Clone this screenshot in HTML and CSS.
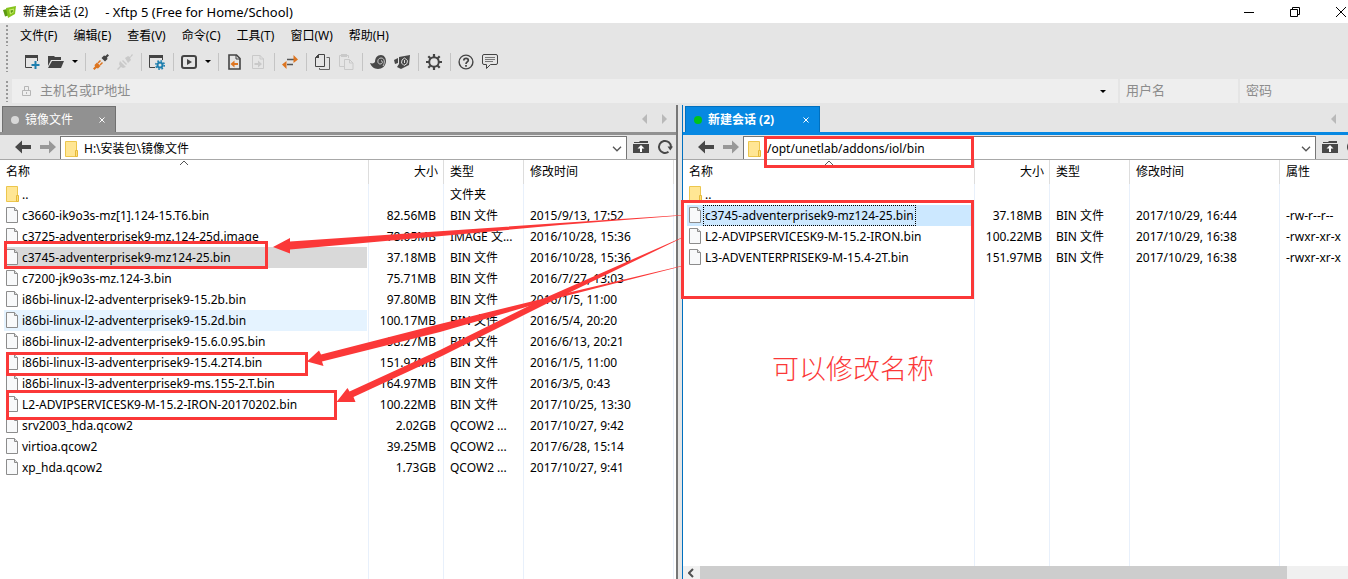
FILE: index.html
```html
<!DOCTYPE html>
<html lang="zh-CN">
<head>
<meta charset="utf-8">
<title>新建会话 (2) - Xftp 5 (Free for Home/School)</title>
<link rel="stylesheet" href="styles.css">
</head>
<body>
<svg class="defs" aria-hidden="true">
  <symbol id="file" viewBox="0 0 13 16"><path d="M.5.5h8l3 3v12H.5z" fill="#f8f9fa" stroke="#8c8c8c"/><path d="M8.500.5v3h3" fill="#ddd" stroke="#8c8c8c"/></symbol>
  <symbol id="folder" viewBox="0 0 13 16"><path d="M.5.5h11v15H.5z" fill="#ffe694" stroke="#ecc64d"/><path d="M10.500 9.500h2v6h-2z" fill="#ffe07a" stroke="#e5b93a"/></symbol>
  <symbol id="back" viewBox="0 0 16 14"><path d="M0 7l7-6.500V5h9v4H7v4.500z" fill="currentColor"/></symbol>
  <symbol id="forward" viewBox="0 0 16 14"><path d="M16 7L9 .5V5H0v4h9v4.500z" fill="currentColor"/></symbol>
  <symbol id="up" viewBox="0 0 16 14"><path d="M1 2h5l1-1h8v2H1zM0 4h16v9H0z" fill="#484848"/><path d="M8 5l3.500 3.500H9V12H7V8.500H4.500z" fill="#fff"/></symbol>
  <symbol id="refresh" viewBox="0 0 16 16"><path d="M11.500 12.800A6 6 0 1 1 14 8" fill="none" stroke="#484848" stroke-width="2"/><path d="M10.500 7.500H16l-2.700 4z" fill="#484848"/></symbol>
  <symbol id="chevron" viewBox="0 0 10 6"><path d="M1 .8l4 4 4-4" fill="none" stroke="#555" stroke-width="1.300"/></symbol>
  <symbol id="caret" viewBox="0 0 6 3"><path d="M0 0h6L3 3z" fill="#000"/></symbol>
  <symbol id="prev" viewBox="0 0 5 10"><path d="M5 0v10L0 5z" fill="#b9b9b9"/></symbol>
  <symbol id="next" viewBox="0 0 5 10"><path d="M0 0v10l5-5z" fill="#b9b9b9"/></symbol>
  <symbol id="close" viewBox="0 0 6 6"><path d="M.5.5l5 5M5.500.5l-5 5" stroke="#fff"/></symbol>
</svg>

<div class="app">
  <header class="titlebar">
    <svg class="logo" viewBox="0 0 14 14"><path d="M0 5l6-1.500 1 6.500-5 1.500z" fill="#5d9a12"/><path d="M3 3l10-2-1 8-7 4z" fill="#86c41c"/><path d="M6 4.500l5-1-.6 4.300L7 9.500z" fill="#c5e86a"/><path d="M7.500 5.500l2.500-.5-.3 2-1.700 1z" fill="#5d9a12"/></svg>
    <h1>新建会话 (2)</h1><span class="product">- Xftp 5 (Free for Home/School)</span>
    <div class="window-buttons">
      <button type="button" aria-label="最小化"><svg viewBox="0 0 10 10"><path d="M0 5.500h10" stroke="#000"/></svg></button>
      <button type="button" aria-label="还原"><svg viewBox="0 0 10 10"><path d="M.5 2.500h7v7h-7zM2.500 2.500v-2h7v7h-2" fill="none" stroke="#000"/></svg></button>
      <button type="button" aria-label="关闭"><svg viewBox="0 0 10 10"><path d="M0 0l10 10M10 0L0 10" stroke="#000"/></svg></button>
    </div>
  </header>

  <nav class="menubar grip">
    <button type="button">文件(F)</button><button type="button">编辑(E)</button><button type="button">查看(V)</button><button type="button">命令(C)</button><button type="button">工具(T)</button><button type="button">窗口(W)</button><button type="button">帮助(H)</button>
  </nav>

  <div class="toolbar grip" role="toolbar">
    <button type="button" aria-label="新建"><svg viewBox="0 0 16 16"><path d="M8 13.500H1.500v-11h12V7" fill="none" stroke="#444"/><path d="M1 1h13v3H1z" fill="#444"/><path d="M11.500 7v8M7.500 11h8" stroke="#1f7fae" stroke-width="2"/></svg></button>
    <button type="button" aria-label="打开"><svg viewBox="0 0 16 16"><path d="M0 2h6l1 1h6v3H3L0 12z" fill="#444"/><path d="M4 7h12l-3 7H0z" fill="#444"/></svg></button>
    <button type="button" class="drop" aria-label="打开列表"><svg><use href="#caret"/></svg></button>
    <i></i>
    <button type="button" aria-label="连接"><svg viewBox="0 0 16 16"><path d="M8.500 4l2.500-2.500 1.500.5L14.500 0 16 1.500 14 3.500l.5 1.500L12 7.500z" fill="#444"/><path d="M4 8.500l3.500 3.500L5 14.500l-1.500-.5L1.500 16 0 14.500l2-2-.5-1.500z" fill="#dd7520"/><path d="M5 9l2.500-2.500M7 11l2.500-2.500" stroke="#dd7520" stroke-width="1.500"/></svg></button>
    <button type="button" aria-label="断开"><svg viewBox="0 0 16 16"><path d="M8 4l3-2 2 1 2-3 1 1-3 3 1 2-3 3zM3 7l6 6-3 1-2-1-3 3-1-1 3-3-1-2zM6 6l4 4-1 1-4-4z" fill="#c9c9c9"/></svg></button>
    <i></i>
    <button type="button" aria-label="会话属性"><svg viewBox="0 0 16 16"><path d="M6 13.500H.5v-11h13V6" fill="none" stroke="#444"/><path d="M0 1h14v3H0z" fill="#444"/><circle cx="11" cy="11" r="2.500" fill="#e5e5e5" stroke="#1f7fae" stroke-width="2"/><circle cx="11" cy="11" r="4.200" fill="none" stroke="#1f7fae" stroke-width="1.600" stroke-dasharray="1.650 1.650"/></svg></button>
    <i></i>
    <button type="button" aria-label="执行"><svg viewBox="0 0 16 16"><rect x="1" y="2" width="14" height="12" rx="2" fill="none" stroke="#444" stroke-width="2"/><path d="M6 5l5 3-5 3z" fill="#444"/></svg></button>
    <button type="button" class="drop" aria-label="执行列表"><svg><use href="#caret"/></svg></button>
    <i></i>
    <button type="button" aria-label="传输到左侧"><svg viewBox="0 0 16 16"><path d="M3 1h7.500L14 4.500V15H3z" fill="none" stroke="#444" stroke-width="1.600"/><path d="M10 1v4h4" fill="none" stroke="#444"/><path d="M4.500 10l4-3.500V9H12v2H8.500v2.500z" fill="#dd7520"/></svg></button>
    <button type="button" aria-label="传输到右侧"><svg viewBox="0 0 16 16"><path d="M2.500 1.500H10l3.500 3.500v9.500h-11z" fill="none" stroke="#c9c9c9"/><path d="M10 1v4h4" fill="none" stroke="#c9c9c9"/><path d="M12 10L8 6.500V9H4.500v2H8v2.500z" fill="#c9c9c9"/></svg></button>
    <i></i>
    <button type="button" aria-label="同步"><svg viewBox="0 0 16 16"><path d="M5 5.500h7M5 10.500h6" stroke="#555" stroke-width="1.500"/><path d="M11.500 1L16 5.500 11.500 9zM4.500 7v8L0 10.500z" fill="#dd7520"/></svg></button>
    <i></i>
    <button type="button" aria-label="复制"><svg viewBox="0 0 16 16"><path d="M4.500.5h6v12h-9v-9z" fill="none" stroke="#444"/><path d="M1 4l4-4v4z" fill="#444"/><path d="M12.500 3.500h3v12h-10V14" fill="none" stroke="#666"/></svg></button>
    <button type="button" aria-label="粘贴"><svg viewBox="0 0 16 16"><path d="M6 12.500H1.500v-11h9V4" fill="none" stroke="#c9c9c9"/><path d="M3 0h6v3H3z" fill="#c9c9c9"/><path d="M6.500 5.500h5l3.500 3.500v6.500H6.500zM11.500 5.500V9H15" fill="none" stroke="#c9c9c9"/></svg></button>
    <i></i>
    <button type="button" aria-label="Xshell"><svg viewBox="0 0 16 16"><path d="M0 9c3 1 4 0 5-1 0-4 2-7 6-7 3 0 5 3 5 6 0 5-4 8-8 8-4 0-7-3-8-6z" fill="#484848"/><path d="M13 12c2-3 2-8-2-8-4 0-4 6-1 6 3 0 3-3 1-3.500" fill="none" stroke="#ccc"/></svg></button>
    <button type="button" aria-label="Xftp"><svg viewBox="0 0 16 16"><path d="M0 6l4-2v5l-3 1zM5 3l11-2-1 10-8 4-4-2 2-3z" fill="#484848"/><path d="M10.500 4l3 2.500-.5 3-3 2L7.500 9 8 6z" fill="#484848" stroke="#ddd"/><path d="M10.500 6v3" stroke="#ddd"/></svg></button>
    <i></i>
    <button type="button" aria-label="选项"><svg viewBox="0 0 16 16"><circle cx="8" cy="8" r="4.800" fill="none" stroke="#444" stroke-width="2"/><path d="M8 0v3M8 13v3M0 8h3M13 8h3M2.300 2.300l2 2M11.700 11.700l2 2M13.700 2.300l-2 2M4.300 11.700l-2 2" stroke="#444" stroke-width="2.200"/></svg></button>
    <i></i>
    <button type="button" aria-label="帮助"><svg viewBox="0 0 16 16"><circle cx="8" cy="8" r="6.900" fill="none" stroke="#444" stroke-width="1.400"/><path d="M5.800 6.500C5.800 3.500 10.300 3.800 10.300 6.200 10.300 8 8 7.800 8 10M8 11v1.800" fill="none" stroke="#444" stroke-width="1.700"/></svg></button>
    <button type="button" aria-label="反馈"><svg viewBox="0 0 16 16"><path d="M2 .5h12q1.500 0 1.500 1.500v7q0 1.500-1.500 1.500H8.500l-4 4v-4H2Q.5 10.500.5 9V2Q.5.5 2 .5z" fill="none" stroke="#444"/><path d="M3 3.500h10M3 5.500h10M3 7.500h8" stroke="#777"/></svg></button>
  </div>

  <form class="connect grip">
    <div class="host">
      <svg viewBox="0 0 9 10"><path d="M.5 4.500h8v5h-8zM2.500 4.500v-4h4v4M4.500 6v2" fill="none" stroke="#b5b5b5"/></svg>
      <input type="text" placeholder="主机名或IP地址" aria-label="主机名或IP地址">
      <button type="button" aria-label="历史"><svg class="caret"><use href="#caret"/></svg></button>
    </div>
    <input type="text" placeholder="用户名" aria-label="用户名">
    <input type="password" placeholder="密码" aria-label="密码">
  </form>

  <main class="panes">
    <section class="pane local">
      <div class="tabs">
        <button type="button" class="tab"><span class="dot"></span><span>镜像文件</span><svg><use href="#close"/></svg></button>
        <div class="tab-scroll"><svg><use href="#prev"/></svg><svg><use href="#next"/></svg></div>
      </div>
      <div class="location">
        <button type="button" aria-label="后退" class="go"><svg><use href="#back"/></svg></button>
        <button type="button" aria-label="前进" class="go off"><svg><use href="#forward"/></svg></button>
        <div class="path"><svg class="type"><use href="#folder"/></svg><input type="text" value="H:\安装包\镜像文件" aria-label="本地路径"><svg class="chevron"><use href="#chevron"/></svg></div>
        <button type="button" class="act" aria-label="上级目录"><svg class="up"><use href="#up"/></svg></button>
        <button type="button" class="act" aria-label="刷新"><svg><use href="#refresh"/></svg></button>
      </div>
      <div class="list">
        <table>
          <colgroup><col class="c-name"><col class="c-size"><col class="c-type"><col class="c-date"><col></colgroup>
          <thead><tr><th>名称<svg class="sort" viewBox="0 0 10 6"><path d="M1 5l4-4 4 4" fill="none" stroke="#555"/></svg></th><th class="num">大小</th><th>类型</th><th>修改时间</th><th></th></tr></thead>
          <tbody>
            <tr><td><div class="name"><svg class="type"><use href="#folder"/></svg><span>..</span></div></td><td></td><td>文件夹</td><td></td><td></td></tr>
            <tr><td><div class="name"><svg class="type"><use href="#file"/></svg><span>c3660-ik9o3s-mz[1].124-15.T6.bin</span></div></td><td class="num">82.56MB</td><td>BIN 文件</td><td>2015/9/13, 17:52</td><td></td></tr>
            <tr><td><div class="name"><svg class="type"><use href="#file"/></svg><span>c3725-adventerprisek9-mz.124-25d.image</span></div></td><td class="num">78.05MB</td><td>IMAGE 文...</td><td>2016/10/28, 15:36</td><td></td></tr>
            <tr><td><div class="name inactive"><svg class="type"><use href="#file"/></svg><span>c3745-adventerprisek9-mz124-25.bin</span></div></td><td class="num">37.18MB</td><td>BIN 文件</td><td>2016/10/28, 15:36</td><td></td></tr>
            <tr><td><div class="name"><svg class="type"><use href="#file"/></svg><span>c7200-jk9o3s-mz.124-3.bin</span></div></td><td class="num">75.71MB</td><td>BIN 文件</td><td>2016/7/27, 13:03</td><td></td></tr>
            <tr><td><div class="name"><svg class="type"><use href="#file"/></svg><span>i86bi-linux-l2-adventerprisek9-15.2b.bin</span></div></td><td class="num">97.80MB</td><td>BIN 文件</td><td>2016/1/5, 11:00</td><td></td></tr>
            <tr><td><div class="name hover"><svg class="type"><use href="#file"/></svg><span>i86bi-linux-l2-adventerprisek9-15.2d.bin</span></div></td><td class="num">100.17MB</td><td>BIN 文件</td><td>2016/5/4, 20:20</td><td></td></tr>
            <tr><td><div class="name"><svg class="type"><use href="#file"/></svg><span>i86bi-linux-l2-adventerprisek9-15.6.0.9S.bin</span></div></td><td class="num">98.27MB</td><td>BIN 文件</td><td>2016/6/13, 20:21</td><td></td></tr>
            <tr><td><div class="name"><svg class="type"><use href="#file"/></svg><span>i86bi-linux-l3-adventerprisek9-15.4.2T4.bin</span></div></td><td class="num">151.97MB</td><td>BIN 文件</td><td>2016/1/5, 11:00</td><td></td></tr>
            <tr><td><div class="name"><svg class="type"><use href="#file"/></svg><span>i86bi-linux-l3-adventerprisek9-ms.155-2.T.bin</span></div></td><td class="num">164.97MB</td><td>BIN 文件</td><td>2016/3/5, 0:43</td><td></td></tr>
            <tr><td><div class="name"><svg class="type"><use href="#file"/></svg><span>L2-ADVIPSERVICESK9-M-15.2-IRON-20170202.bin</span></div></td><td class="num">100.22MB</td><td>BIN 文件</td><td>2017/10/25, 13:30</td><td></td></tr>
            <tr><td><div class="name"><svg class="type"><use href="#file"/></svg><span>srv2003_hda.qcow2</span></div></td><td class="num">2.02GB</td><td>QCOW2 ...</td><td>2017/10/27, 9:42</td><td></td></tr>
            <tr><td><div class="name"><svg class="type"><use href="#file"/></svg><span>virtioa.qcow2</span></div></td><td class="num">39.25MB</td><td>QCOW2 ...</td><td>2017/6/28, 15:14</td><td></td></tr>
            <tr><td><div class="name"><svg class="type"><use href="#file"/></svg><span>xp_hda.qcow2</span></div></td><td class="num">1.73GB</td><td>QCOW2 ...</td><td>2017/10/27, 9:41</td><td></td></tr>
            <tr class="rest"><td></td><td></td><td></td><td></td><td></td></tr>
          </tbody>
        </table>
      </div>
    </section>

    <section class="pane remote">
      <div class="tabs">
        <button type="button" class="tab"><span class="dot"></span><span>新建会话 (2)</span><svg><use href="#close"/></svg></button>
        <div class="tab-scroll"><svg><use href="#prev"/></svg><svg><use href="#next"/></svg></div>
      </div>
      <div class="location">
        <button type="button" aria-label="后退" class="go"><svg><use href="#back"/></svg></button>
        <button type="button" aria-label="前进" class="go off"><svg><use href="#forward"/></svg></button>
        <div class="path"><svg class="type"><use href="#folder"/></svg><input type="text" value="/opt/unetlab/addons/iol/bin" aria-label="远程路径"><svg class="chevron"><use href="#chevron"/></svg></div>
        <button type="button" class="act" aria-label="上级目录"><svg class="up"><use href="#up"/></svg></button>
        <button type="button" class="act" aria-label="刷新"><svg><use href="#refresh"/></svg></button>
      </div>
      <div class="list">
        <table>
          <colgroup><col class="c-name"><col class="c-size"><col class="c-type"><col class="c-date"><col></colgroup>
          <thead><tr><th>名称<svg class="sort" viewBox="0 0 10 6"><path d="M1 5l4-4 4 4" fill="none" stroke="#555"/></svg></th><th class="num">大小</th><th>类型</th><th>修改时间</th><th>属性</th></tr></thead>
          <tbody>
            <tr><td><div class="name"><svg class="type"><use href="#folder"/></svg><span>..</span></div></td><td></td><td></td><td></td><td></td></tr>
            <tr><td><div class="name selected"><svg class="type"><use href="#file"/></svg><span>c3745-adventerprisek9-mz124-25.bin</span></div></td><td class="num">37.18MB</td><td>BIN 文件</td><td>2017/10/29, 16:44</td><td>-rw-r--r--</td></tr>
            <tr><td><div class="name"><svg class="type"><use href="#file"/></svg><span>L2-ADVIPSERVICESK9-M-15.2-IRON.bin</span></div></td><td class="num">100.22MB</td><td>BIN 文件</td><td>2017/10/29, 16:38</td><td>-rwxr-xr-x</td></tr>
            <tr><td><div class="name"><svg class="type"><use href="#file"/></svg><span>L3-ADVENTERPRISEK9-M-15.4-2T.bin</span></div></td><td class="num">151.97MB</td><td>BIN 文件</td><td>2017/10/29, 16:38</td><td>-rwxr-xr-x</td></tr>
            <tr class="rest"><td></td><td></td><td></td><td></td><td></td></tr>
          </tbody>
        </table>
      </div>
      <div class="scrollbar"><svg viewBox="0 0 6 10"><path d="M5 1L1 5l4 4" fill="none" stroke="#505050" stroke-width="2"/></svg><div class="thumb"></div></div>
    </section>
  </main>

  <svg class="marks" aria-hidden="true">
    <g fill="none" stroke="#fb3838" stroke-width="3">
      <path d="M765.500 137.500h207v29h-207z"/>
      <path d="M5.500 242.500h261v25h-261z"/>
      <path d="M7.500 353.500h299v21h-299z"/>
      <path d="M7.500 391.500h328v27h-328z"/>
      <path d="M682.500 201.500h290v96h-290z"/>
    </g>
    <g fill="#fb3838">
      <path d="M273 247l17-9v3.500L436 231.500 560 223l122-8v.5L560 225l-124 11.500-146 13v4z"/>
      <path d="M307 361.500L319 350.500l2 4L440 324l110-27 131-31v.5L550 300 440 332 322 361.500l1.500 4.500z"/>
      <path d="M336.500 402l11-14 2 3.500L440 350l107-53 135-59.500v.5L552 301 442 356 353.500 397l2 5z"/>
    </g>
  </svg>
  <p class="note">可以修改名称</p>
</div>
</body>
</html>
```
FILE: styles.css
```css
* { box-sizing: border-box; }

body {
  margin: 0;
  font: 12px/20px "Noto Sans", "Noto Sans CJK SC", sans-serif;
  color: #000;
  background: #e5e5e5;
}

button, input { font: inherit; color: inherit; border: 0; padding: 0; margin: 0; background: none; outline: 0; }
button { display: flex; align-items: center; justify-content: center; }
svg { display: block; flex: none; }
.defs { position: absolute; width: 0; height: 0; }

.app { position: relative; display: flex; flex-direction: column; height: 100vh; overflow: hidden; }

.titlebar { display: flex; align-items: center; height: 23px; flex: none; padding-left: 3px; background: #fff; white-space: pre; }
.titlebar h1 { margin: 0 17px 0 6px; font-size: 12px; font-weight: 400; }
.product { font-size: 13px; }
.logo { width: 14px; height: 14px; }
.window-buttons { display: flex; margin-left: auto; margin-right: -16px; }
.window-buttons button { width: 46px; height: 20px; }
.window-buttons svg { width: 10px; height: 10px; }

.grip { display: flex; flex: none; align-items: center; }
.grip::before {
  content: "";
  flex: none;
  width: 2px;
  height: 21px;
  margin-left: 6px;
  background: repeating-linear-gradient(#999 0 2px, transparent 2px 4px);
}

.menubar { height: 25px; gap: 16px; }
.menubar button:first-child { margin-left: -4px; }

.toolbar { height: 29px; padding-bottom: 2px; }
.toolbar::before { margin-right: 12px; }
.toolbar button { width: 24px; height: 24px; }
.toolbar button svg { width: 16px; height: 16px; }
.toolbar .drop { width: 13px; }
.toolbar .drop svg, .caret { width: 6px; height: 3px; }
.toolbar i { width: 8px; height: 18px; background: linear-gradient(#c4c4c4, #c4c4c4) center / 1px 100% no-repeat; }

.connect { height: 28px; gap: 2px; font-size: 13px; }
.connect input { height: 24px; padding-bottom: 2px; background: #eee; }
.connect > input { width: 118px; padding-left: 6px; }
.connect > input:last-child { width: 108px; }
.connect ::placeholder { color: #8c8c8c; }
.host { display: flex; flex: 1; align-items: center; height: 24px; margin-left: 2px; padding-left: 10px; background: #eee; }
.host > svg { width: 9px; height: 10px; margin-right: 9px; }
.host input { flex: 1; min-width: 0; }
.host button { width: 30px; height: 24px; }

.panes { display: grid; flex: 1; min-height: 0; grid-template-columns: minmax(0, 339fr) minmax(0, 333fr); column-gap: 4px; }
.pane { display: flex; flex-direction: column; min-height: 0; --accent: #919191; --edge: #707070; }
.local { border-right: 2px solid #777; }
.remote { --accent: #0788e2; --edge: #0070bf; border-left: 1px solid #0070bf; margin-right: -17px; }

.tabs { display: flex; flex: none; align-items: flex-end; justify-content: space-between; height: 30px; padding: 1px 9px 0 2px; border-bottom: 3px solid var(--accent); }
.tab { width: 114px; height: 26px; padding: 0 10px 0 8px; color: #fff; background: var(--accent); border: 1px solid var(--edge); border-bottom: 0; }
.tab svg { width: 6px; height: 6px; margin-left: auto; }
.dot { width: 8px; height: 8px; margin-right: 6px; border-radius: 50%; background: #d8d8d8; }
.remote .tab { width: 135px; font-weight: 700; }
.remote .dot { background: #00c31a; }
.tab-scroll { display: flex; gap: 15px; align-self: center; }
.tab-scroll svg { width: 5px; height: 10px; }

.location { display: flex; flex: none; align-items: center; height: 25px; padding: 0 3px 0 15px; border-bottom: 1px solid #a8a8a8; }
.go { width: 16px; height: 20px; margin-right: 9px; color: #484848; }
.go + .go { margin-right: 4px; }
.go.off { color: #989898; }
.go svg { width: 16px; height: 14px; }
.path { display: flex; flex: 1; align-items: center; align-self: stretch; margin-top: 1px; padding: 2px 4px 0; background: #fff; border: 1px solid #777; border-bottom: 0; }
.path input { flex: 1; min-width: 0; height: 20px; margin-left: 6px; }
.type { width: 13px; height: 16px; }
.chevron { width: 10px; height: 6px; }
.act { width: 16px; height: 20px; margin-left: 6px; }
.act + .act { margin-left: 8px; }
.act svg { width: 16px; height: 16px; }
.act .up { height: 14px; }

.list { display: grid; flex: 1; min-height: 0; background: #fff; }
table { width: 100%; height: 100%; table-layout: fixed; border-collapse: separate; border-spacing: 0; white-space: nowrap; }
.c-name { width: 369px; }
.remote .c-name { width: 292px; }
.c-size { width: 75px; }
.c-type { width: 80px; }
.c-date { width: 150px; }
th, td { height: 21px; padding: 0 6px; font-weight: 400; text-align: left; border-right: 1px solid #e8f0fb; overflow: hidden; }
th { position: relative; height: 24px; border-color: #ddd; }
th:last-child, td:last-child { border-right: 0; }
td:first-child { padding: 0 1px 0 4px; }
.num { padding-right: 7px; padding-left: 0; text-align: right; }
th.num { padding-right: 5px; }
.rest td { height: auto; }
.sort { position: absolute; top: 0; left: 50%; width: 10px; height: 6px; margin-left: -5px; }
.name { display: flex; align-items: center; gap: 2px; height: 21px; padding-left: 2px; }
.name span { padding: 0 1px; line-height: 19px; }
.name .type { margin-bottom: 2px; }
.inactive { background: #d9d9d9; }
.hover { background: #e5f3ff; }
.selected { background: #cce8ff; }
.selected span { outline: 1px dotted #000; }

.scrollbar { display: flex; flex: none; align-items: center; height: 13px; background: #f0f0f0; }
.scrollbar svg { width: 6px; height: 10px; margin: 0 6px 0 5px; }
.thumb { width: 86%; height: 100%; background: #cdcdcd; }

.marks { position: absolute; inset: 0; width: 100%; height: 100%; pointer-events: none; }
.note { position: absolute; left: 772px; top: 349px; margin: 0; font-size: 27px; font-weight: 300; line-height: 40px; color: #fb3838; }
```
